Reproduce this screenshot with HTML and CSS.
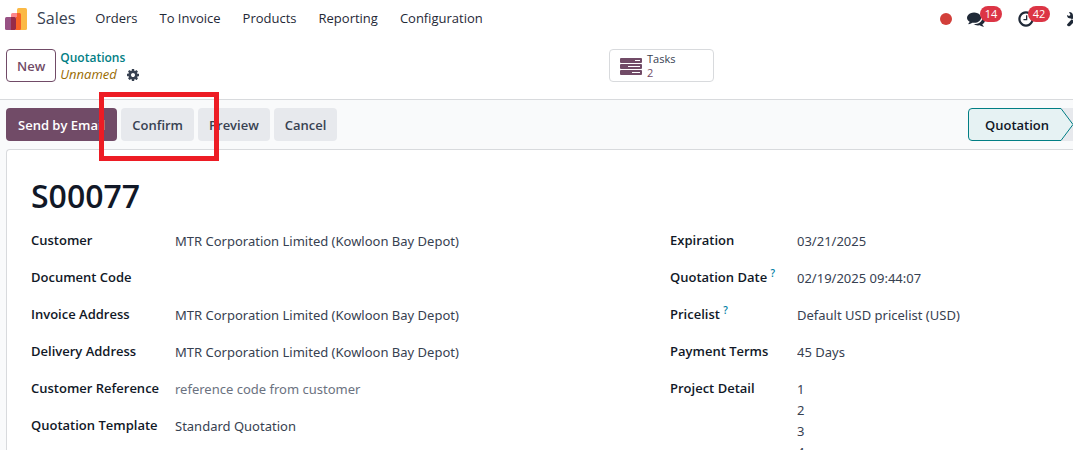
FILE: index.html
```html
<!DOCTYPE html>
<html lang="en">
<head>
<meta charset="utf-8">
<title>S00077 - Sales</title>
<link rel="stylesheet" href="styles.css">
</head>
<body>
<header class="navbar">
  <a class="brand" href="#">
    <svg class="brand-logo" viewBox="0 0 22 22" aria-hidden="true">
      <path fill="#fbb945" d="M12 1.500Q12 0 13.500 0H20.500Q22 0 22 1.500V20.500Q22 22 20.500 22H12Z"/>
      <path fill="#985184" d="M0 10.500Q0 9 1.500 9H10V22H1.500Q0 22 0 20.500Z"/>
      <path fill="#fc868b" d="M6 6.500Q6 5 7.500 5H12V22H6Z"/>
      <path fill="#962b48" d="M6 9H9.500Q11 9 11 10.500V20.500Q11 22 9.500 22H6Z"/>
      <path fill="#f86126" d="M12 5H14.500Q16 5 16 6.500V20.500Q16 22 14.500 22H10Q11 21.500 11 20.500V9H12Z"/>
    </svg>
    <span>Sales</span>
  </a>
  <nav class="menu">
    <a href="#">Orders</a>
    <a href="#">To Invoice</a>
    <a href="#">Products</a>
    <a href="#">Reporting</a>
    <a href="#">Configuration</a>
  </nav>
  <div class="systray">
    <span class="record-dot"></span>
    <button class="tray-button messages" aria-label="Messages">
      <svg width="18" height="18" viewBox="0 0 1792 1792"><path d="M1408 768q0 139-94 257t-256.500 186.500-353.500 68.500q-86 0-176-16-124 88-278 128-36 9-86 16h-3q-11 0-20.500-8t-11.500-21q-1-3-1-6.500t.5-6.500 2-6l2.500-5 3.500-5.500 4-5 4.500-5 4-4.500q5-6 23-25t26-29.500 22.500-29 25-38.500 20.500-44q-124-72-195-177t-71-224q0-139 94-257t256.500-186.500 353.500-68.500 353.500 68.500 256.500 186.500 94 257zm384 256q0 120-71 224.500t-195 176.500q10 24 20.500 44t25 38.500 22.500 29 26 29.500 23 25q1 1 4 4.500t4.500 5 4 5 3.500 5.500l2.500 5 2 6 .5 6.500-1 6.500q-3 14-13 22t-22 7q-50-7-86-16-154-40-278-128-90 16-176 16-271 0-472-132 58 4 88 4 161 0 309-45t264-129q125-92 192-212t67-254q0-77-23-152 129 71 204 178t75 230z"/></svg>
      <span class="badge">14</span>
    </button>
    <button class="tray-button activities" aria-label="Activities">
      <svg width="18" height="18" viewBox="0 0 1792 1792"><path d="M1024 544v448q0 14-9 23t-23 9h-320q-14 0-23-9t-9-23v-64q0-14 9-23t23-9h224v-352q0-14 9-23t23-9h64q14 0 23 9t9 23zm416 352q0-148-73-273t-198-198-273-73-273 73-198 198-73 273 73 273 198 198 273 73 273-73 198-198 73-273zm224 0q0 209-103 385.500t-279.500 279.500-385.500 103-385.500-103-279.500-279.500-103-385.500 103-385.500 279.500-279.500 385.500-103 385.500 103 279.500 279.500 103 385.500z"/></svg>
      <span class="badge">42</span>
    </button>
    <button class="tray-button tools" aria-label="Developer tools">
      <svg width="16" height="16" viewBox="0 0 16 16"><path d="M1 13.500 5 9 7 7.500 9 10 4 15Q1 16 1 13.500ZM3 1 4.500 4 3 5 1 4Q1 7.500 5 7.500L8 10 10 7 7 5Q7 1 3 1ZM9 8 15 14 14 15 12 15 7 10Z"/></svg>
    </button>
  </div>
</header>

<section class="control-panel">
  <div class="breadcrumb-area">
    <button class="btn btn-outline">New</button>
    <div class="breadcrumb">
      <a href="#">Quotations</a>
      <div class="current">
        <em>Unnamed</em>
        <button class="icon-button" aria-label="Actions">
          <svg width="12" height="12" viewBox="128 128 1536 1536"><path d="M1152 896q0-106-75-181t-181-75-181 75-75 181 75 181 181 75 181-75 75-181zm512-109v222q0 12-8 23t-20 13l-185 28q-19 54-39 91 35 50 107 138 10 12 10 25t-9 23q-27 37-99 108t-94 71q-12 0-26-9l-138-108q-44 23-91 38-16 136-29 186-7 28-36 28h-222q-14 0-24.500-8.500t-11.500-21.500l-28-184q-49-16-90-37l-141 107q-10 9-25 9-14 0-25-11-126-114-165-168-7-10-7-23 0-12 8-23 15-21 51-66.500t54-70.500q-27-50-41-99l-183-27q-13-2-21-12.500t-8-23.500v-222q0-12 8-23t19-13l186-28q14-46 39-92-40-57-107-138-10-12-10-24 0-10 9-23 26-36 98.500-107.500t94.500-71.500q13 0 26 10l138 107q44-23 91-38 16-136 29-186 7-28 36-28h222q14 0 24.500 8.500t11.500 21.500l28 184q49 16 90 37l142-107q9-9 24-9 13 0 25 10 129 119 165 170 7 8 7 22 0 12-8 23-15 21-51 66.500t-54 70.500q26 50 41 98l183 28q13 2 21 12.500t8 23.500z"/></svg>
        </button>
      </div>
    </div>
  </div>
  <div class="stat-area">
    <button class="stat-button">
      <svg width="22" height="17" viewBox="0 0 22 17" aria-hidden="true">
        <path fill="#714b67" fill-rule="evenodd" d="M1 0H21Q22 0 22 1V4Q22 5 21 5H1Q0 5 0 4V1Q0 0 1 0ZM15 2V3H20V2ZM1 6H21Q22 6 22 7V10Q22 11 21 11H1Q0 11 0 10V7Q0 6 1 6ZM8 8V9H20V8ZM1 12H21Q22 12 22 13V16Q22 17 21 17H1Q0 17 0 16V13Q0 12 1 12ZM12 14V15H20V14Z"/>
      </svg>
      <span class="stat-text"><span>Tasks</span><span class="stat-value">2</span></span>
    </button>
  </div>
</section>

<main class="form-view">
  <div class="status-row">
    <div class="actions">
      <button class="btn btn-primary">Send by Email</button>
      <div class="confirm-step">
        <button class="btn btn-secondary">Confirm</button>
        <span class="highlight"></span>
      </div>
      <button class="btn btn-secondary">Preview</button>
      <button class="btn btn-secondary">Cancel</button>
    </div>
    <button class="stage">
      <svg class="stage-shape" viewBox="0 0 105 33" aria-hidden="true">
        <path fill="#e7e9ed" d="M92 0H105V33H92Z"/>
        <path fill="#e6f2f3" stroke="#017e84" d="M93 .5H4Q.5 .5 .5 4V29Q.5 32.500 4 32.500H93L105 16.500Z"/>
      </svg>
      <span class="stage-label">Quotation</span>
    </button>
  </div>

  <form class="sheet">
    <h1>S00077</h1>
    <div class="groups">
      <div class="group group-main">
        <div class="field"><label for="customer">Customer</label><input id="customer" value="MTR Corporation Limited (Kowloon Bay Depot)"></div>
        <div class="field"><label for="code">Document Code</label><input id="code"></div>
        <div class="field"><label for="invoice">Invoice Address</label><input id="invoice" value="MTR Corporation Limited (Kowloon Bay Depot)"></div>
        <div class="field"><label for="delivery">Delivery Address</label><input id="delivery" value="MTR Corporation Limited (Kowloon Bay Depot)"></div>
        <div class="field"><label for="reference">Customer Reference</label><input id="reference" placeholder="reference code from customer"></div>
        <div class="field"><label for="template">Quotation Template</label><input id="template" value="Standard Quotation"></div>
      </div>
      <div class="group group-side">
        <div class="field"><label for="expiration">Expiration</label><input id="expiration" value="03/21/2025"></div>
        <div class="field"><label for="date">Quotation Date <sup>?</sup></label><input id="date" value="02/19/2025 09:44:07"></div>
        <div class="field"><label for="pricelist">Pricelist <sup>?</sup></label><input id="pricelist" value="Default USD pricelist (USD)"></div>
        <div class="field"><label for="terms">Payment Terms</label><input id="terms" value="45 Days"></div>
        <div class="field"><label for="detail">Project Detail</label><textarea id="detail" rows="4">1
2
3
4</textarea></div>
      </div>
    </div>
  </form>
</main>
</body>
</html>
```
FILE: styles.css
```css
* {
  box-sizing: border-box;
}

body {
  margin: 0;
  min-height: 100vh;
  display: flex;
  flex-direction: column;
  overflow: hidden;
  background: #fff;
  color: #374151;
  font: 13px/21px "Open Sans", "Noto Sans", sans-serif;
}

a {
  color: inherit;
  text-decoration: none;
}

button {
  margin: 0;
  padding: 0;
  border: 0;
  background: none;
  color: inherit;
  font: inherit;
  cursor: pointer;
}

svg {
  display: block;
  flex: none;
  fill: currentColor;
}

.navbar {
  display: flex;
  align-items: center;
  height: 37px;
  padding-left: 5px;
}

.brand {
  display: flex;
  align-items: center;
  gap: 10px;
  font-size: 16px;
}

.brand-logo {
  width: 22px;
  height: 22px;
}

.menu {
  display: flex;
  gap: 22px;
  margin-left: 20px;
  color: #1f2937;
}

.systray {
  display: flex;
  align-items: center;
  margin-left: auto;
  color: #1f2937;
}

.record-dot {
  width: 12px;
  height: 12px;
  margin-right: 15px;
  border-radius: 50%;
  background: #d23f3a;
}

.tray-button {
  position: relative;
}

.messages {
  margin-right: 32px;
}

.activities {
  margin-right: 31px;
}

.tools {
  width: 7px;
  overflow: hidden;
}

.badge {
  position: absolute;
  top: -4px;
  left: 13px;
  width: 22px;
  border-radius: 8px;
  background: #dc3545;
  color: #fff;
  font-size: 11px;
  line-height: 16px;
  text-align: center;
}

.activities .badge {
  left: 11px;
}

.control-panel {
  display: grid;
  grid-template-columns: 603fr 464fr;
  align-items: start;
  padding: 12px 0 17px 6px;
  border-bottom: 1px solid #d8dadd;
}

.breadcrumb-area {
  display: flex;
  align-items: start;
  gap: 4px;
  height: 33px;
}

.breadcrumb {
  font-size: 13px;
  line-height: 17px;
}

.breadcrumb a {
  display: block;
  color: #017e84;
  font-size: 12px;
  font-weight: 600;
}

.current {
  display: flex;
  align-items: center;
  gap: 10px;
  color: #9a6b01;
}

.icon-button {
  color: #374151;
}

.btn {
  padding: 7px 11px 5px;
  border-radius: 4px;
  font-weight: 600;
  white-space: nowrap;
}

.btn-outline {
  padding: 6px 10px 4px;
  border: 1px solid #714b67;
  color: #714b67;
}

.btn-primary {
  padding: 7px 12px 5px;
  background: #714b67;
  color: #fff;
}

.btn-secondary {
  background: #e7e9ed;
}

.stat-button {
  display: flex;
  align-items: center;
  gap: 5px;
  min-width: 105px;
  padding: 2px 10px 1px;
  border: 1px solid #d8dadd;
  border-radius: 4px;
  font-size: 11px;
  line-height: 14px;
}

.stat-text {
  display: flex;
  flex-direction: column;
  align-items: flex-start;
}

.stat-value {
  color: #714b67;
}

.form-view {
  flex: 1;
  display: flex;
  flex-direction: column;
  padding-left: 6px;
  background: #f9fafb;
}

.status-row {
  display: flex;
  justify-content: space-between;
  padding: 8px 0;
}

.actions {
  display: flex;
  gap: 4px;
}

.confirm-step {
  position: relative;
}

.highlight {
  position: absolute;
  z-index: 1;
  inset: -16px -25px -20px -22px;
  border: 5px solid #ed1c24;
  pointer-events: none;
}

.stage {
  position: relative;
  width: 105px;
  padding: 2px 7px 0 0;
  color: #111827;
  font-weight: 600;
}

.stage-shape {
  position: absolute;
  inset: 0;
}

.stage-label {
  position: relative;
}

.sheet {
  flex: 1;
  padding: 24px 0 0 24px;
  border: solid #d8dadd;
  border-width: 1px 0 0 1px;
  border-radius: 4px 0 0 0;
  background: #fff;
}

h1 {
  margin: 0 0 5px;
  color: #111827;
  font-size: 32px;
  font-weight: 600;
  line-height: 44px;
}

.groups {
  display: grid;
  grid-template-columns: 639fr 403fr;
}

.field {
  display: grid;
  align-items: start;
  padding: 8px 0;
}

.group-main .field {
  grid-template-columns: 144px 1fr;
}

.group-side .field {
  grid-template-columns: 127px 1fr;
}

label {
  color: #111827;
  font-weight: 600;
  line-height: 19px;
  white-space: nowrap;
}

sup {
  color: #0180a5;
  font-size: 10px;
  line-height: 0;
}

input,
textarea {
  display: block;
  width: 100%;
  min-width: 0;
  height: 21px;
  margin: 0;
  padding: 0;
  border: 0;
  outline: 0;
  background: none;
  color: inherit;
  font: 13px/21px "Noto Sans", "Open Sans", sans-serif;
}

textarea {
  height: auto;
  resize: none;
  overflow: hidden;
}

input::placeholder {
  color: #6b7280;
  opacity: 1;
}
```
